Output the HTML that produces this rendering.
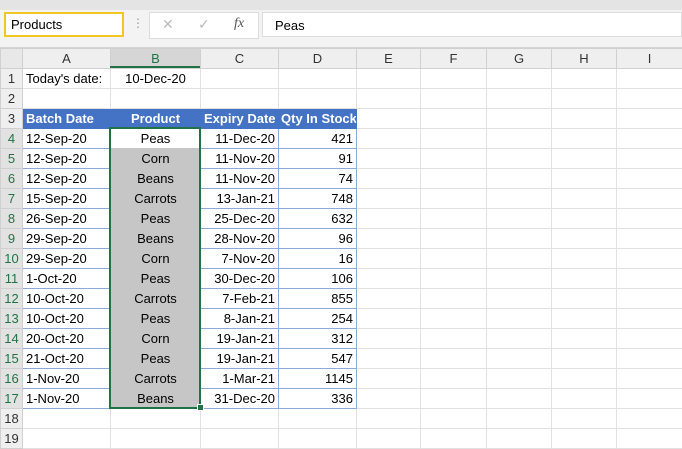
<!DOCTYPE html><html><head><style>
body{margin:0;width:682px;height:439px;overflow:hidden;background:#fff;font-family:"Liberation Sans",sans-serif;position:relative}
.top{position:absolute;left:0;top:0;width:682px;height:48px;background:#f3f3f3;border-bottom:1px solid #d4d4d4;box-sizing:border-box}
.band{position:absolute;left:0;top:0;width:682px;height:10px;background:#e4e4e4}
.nb{position:absolute;left:4px;top:12px;width:111px;height:21px;border:2px solid #f3c623;background:#fff;font-size:13px;line-height:21px;padding-left:5px;box-sizing:content-box}
.fx{position:absolute;left:149px;top:12px;width:108px;height:25px;background:#fff;border:1px solid #dcdcdc;color:#bbb;font-size:14px}
.fb{position:absolute;left:262px;top:12px;width:420px;height:25px;background:#fff;border:1px solid #dcdcdc;font-size:13px;line-height:25px;padding-left:12px;box-sizing:border-box}
table{position:absolute;left:0;top:48px;border-collapse:collapse;table-layout:fixed;font-size:13px;width:682px}
td{height:19px;padding:0 3px;border:1px solid #e1e1e1;white-space:nowrap;overflow:hidden;color:#000;line-height:17px}
tr.h td{background:#efefef;text-align:center;color:#333;border-color:#d0d0d0}
td.r{background:#efefef;text-align:center;color:#333;padding:0;border-color:#d0d0d0}
td.rs{color:#217346;background:#e2e2e2}
.hb td.d{background:#4472c4;color:#fff;font-weight:bold;border-color:#4472c4}
.g td.d{border-color:#8eaadb}
.c{text-align:center}.rt{text-align:right}
td.sel{background:#c6c6c6;text-align:center;border-color:#c6c6c6}
</style></head><body>
<div class="top"><div class="band"></div>
<div class="nb">Products</div>
<div style="position:absolute;left:132px;top:16px;color:#999;font-size:12px">⋮</div>
<div class="fx"><span style="position:absolute;left:12px;top:3px">✕</span><span style="position:absolute;left:48px;top:3px">✓</span><span style="position:absolute;left:84px;top:3px;color:#555;font-style:italic;font-family:'Liberation Serif',serif">fx</span></div>
<div class="fb">Peas</div></div>
<table>
<colgroup><col style="width:22px"><col style="width:88px"><col style="width:90px"><col style="width:78px"><col style="width:78px"><col style="width:64px"><col style="width:66px"><col style="width:65px"><col style="width:65px"><col style="width:66px"></colgroup>
<tr class="h"><td style="background:#e8e8e8"></td><td>A</td><td style="background:#d6d6d6;color:#217346">B</td><td>C</td><td>D</td><td>E</td><td>F</td><td>G</td><td>H</td><td>I</td></tr>
<tr><td class="r">1</td><td>Today's date:</td><td class="c">10-Dec-20</td><td></td><td></td><td></td><td></td><td></td><td></td><td></td></tr>
<tr><td class="r">2</td><td></td><td></td><td></td><td></td><td></td><td></td><td></td><td></td><td></td></tr>
<tr class="hb"><td class="r">3</td><td class="d">Batch Date</td><td class="d c">Product</td><td class="d c">Expiry Date</td><td class="d" style="padding:0 2px">Qty In Stock</td><td></td><td></td><td></td><td></td><td></td></tr>
<tr class="g"><td class="r rs">4</td><td class="d">12-Sep-20</td><td class="sel" style="background:#fff">Peas</td><td class="d rt">11-Dec-20</td><td class="d rt">421</td><td></td><td></td><td></td><td></td><td></td></tr>
<tr class="g"><td class="r rs">5</td><td class="d">12-Sep-20</td><td class="sel">Corn</td><td class="d rt">11-Nov-20</td><td class="d rt">91</td><td></td><td></td><td></td><td></td><td></td></tr>
<tr class="g"><td class="r rs">6</td><td class="d">12-Sep-20</td><td class="sel">Beans</td><td class="d rt">11-Nov-20</td><td class="d rt">74</td><td></td><td></td><td></td><td></td><td></td></tr>
<tr class="g"><td class="r rs">7</td><td class="d">15-Sep-20</td><td class="sel">Carrots</td><td class="d rt">13-Jan-21</td><td class="d rt">748</td><td></td><td></td><td></td><td></td><td></td></tr>
<tr class="g"><td class="r rs">8</td><td class="d">26-Sep-20</td><td class="sel">Peas</td><td class="d rt">25-Dec-20</td><td class="d rt">632</td><td></td><td></td><td></td><td></td><td></td></tr>
<tr class="g"><td class="r rs">9</td><td class="d">29-Sep-20</td><td class="sel">Beans</td><td class="d rt">28-Nov-20</td><td class="d rt">96</td><td></td><td></td><td></td><td></td><td></td></tr>
<tr class="g"><td class="r rs">10</td><td class="d">29-Sep-20</td><td class="sel">Corn</td><td class="d rt">7-Nov-20</td><td class="d rt">16</td><td></td><td></td><td></td><td></td><td></td></tr>
<tr class="g"><td class="r rs">11</td><td class="d">1-Oct-20</td><td class="sel">Peas</td><td class="d rt">30-Dec-20</td><td class="d rt">106</td><td></td><td></td><td></td><td></td><td></td></tr>
<tr class="g"><td class="r rs">12</td><td class="d">10-Oct-20</td><td class="sel">Carrots</td><td class="d rt">7-Feb-21</td><td class="d rt">855</td><td></td><td></td><td></td><td></td><td></td></tr>
<tr class="g"><td class="r rs">13</td><td class="d">10-Oct-20</td><td class="sel">Peas</td><td class="d rt">8-Jan-21</td><td class="d rt">254</td><td></td><td></td><td></td><td></td><td></td></tr>
<tr class="g"><td class="r rs">14</td><td class="d">20-Oct-20</td><td class="sel">Corn</td><td class="d rt">19-Jan-21</td><td class="d rt">312</td><td></td><td></td><td></td><td></td><td></td></tr>
<tr class="g"><td class="r rs">15</td><td class="d">21-Oct-20</td><td class="sel">Peas</td><td class="d rt">19-Jan-21</td><td class="d rt">547</td><td></td><td></td><td></td><td></td><td></td></tr>
<tr class="g"><td class="r rs">16</td><td class="d">1-Nov-20</td><td class="sel">Carrots</td><td class="d rt">1-Mar-21</td><td class="d rt">1145</td><td></td><td></td><td></td><td></td><td></td></tr>
<tr class="g"><td class="r rs">17</td><td class="d">1-Nov-20</td><td class="sel">Beans</td><td class="d rt">31-Dec-20</td><td class="d rt">336</td><td></td><td></td><td></td><td></td><td></td></tr>
<tr><td class="r">18</td><td></td><td></td><td></td><td></td><td></td><td></td><td></td><td></td><td></td></tr>
<tr><td class="r">19</td><td></td><td></td><td></td><td></td><td></td><td></td><td></td><td></td><td></td></tr>
</table>
<div style="position:absolute;left:110px;top:66px;width:90px;height:2px;background:#217346"></div>
<div style="position:absolute;left:109px;top:127px;width:88px;height:278px;border:2px solid #217346"></div>
<div style="position:absolute;left:197px;top:404px;width:5px;height:5px;background:#217346;border:1px solid #fff"></div>
</body></html>
